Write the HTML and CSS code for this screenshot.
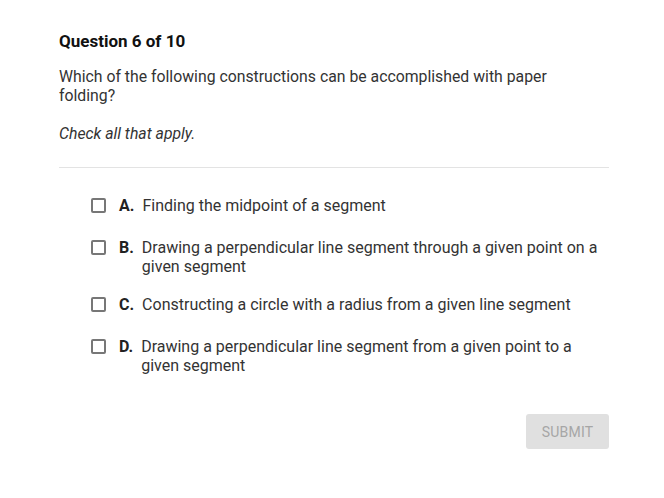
FILE: index.html
```html
<!DOCTYPE html>
<html>
<head>
<meta charset="utf-8">
<link rel="stylesheet" href="styles.css">
</head>
<body>
<div class="quiz">
  <h1 class="title">Question 6 of 10</h1>
  <p class="prompt">Which of the following constructions can be accomplished with paper folding?</p>
  <p class="hint">Check all that apply.</p>
  <hr class="divider">
  <ul class="options">
    <li class="option"><span class="box-col"><span class="box"></span></span><span class="letter">A.</span><span class="text">Finding the midpoint of a segment</span></li>
    <li class="option"><span class="box-col"><span class="box"></span></span><span class="letter">B.</span><span class="text">Drawing a perpendicular line segment through a given point on a given segment</span></li>
    <li class="option"><span class="box-col"><span class="box"></span></span><span class="letter">C.</span><span class="text">Constructing a circle with a radius from a given line segment</span></li>
    <li class="option"><span class="box-col"><span class="box"></span></span><span class="letter">D.</span><span class="text">Drawing a perpendicular line segment from a given point to a given segment</span></li>
  </ul>
  <div class="actions"><button class="submit">SUBMIT</button></div>
</div>
</body>
</html>
```
FILE: styles.css
```css
html, body {
  margin: 0;
  padding: 0;
  background: #fff;
}
body {
  font-family: Roboto, "Liberation Sans", sans-serif;
  color: #333;
}
.quiz {
  width: 550px;
  margin-left: 59px;
  padding-top: 32px;
}
.title {
  margin: 0;
  font-size: 17px;
  line-height: 19px;
  font-weight: 700;
  color: #111;
}
.prompt {
  margin: 16px 0 0;
  max-width: 530px;
  font-size: 15.8px;
  line-height: 19px;
  color: #333;
}
.hint {
  margin: 19px 0 0;
  font-size: 15.8px;
  line-height: 19px;
  font-style: italic;
  color: #333;
}
.divider {
  margin: 24px 0 0;
  border: 0;
  border-top: 1px solid #e3e3e3;
  height: 0;
}
.options {
  list-style: none;
  margin: 28px 0 0;
  padding: 0 0 0 32px;
  display: flex;
  flex-direction: column;
  gap: 19px;
}
.option {
  display: flex;
  align-items: flex-start;
  font-size: 16px;
  line-height: 19px;
  color: #333;
}
.box-col {
  display: block;
  height: 23px;
  flex: none;
}
.box {
  display: block;
  box-sizing: border-box;
  width: 15px;
  height: 15px;
  margin-top: 2px;
  border: 2px solid #777;
  border-radius: 2px;
}
.letter {
  margin-left: 13px;
  margin-right: 8px;
  font-weight: 700;
  color: #222;
  flex: none;
}
.text {
  flex: 1;
}
.actions {
  display: flex;
  justify-content: flex-end;
  margin-top: 39px;
}
.submit {
  width: 83px;
  height: 35px;
  border: 0;
  border-radius: 3px;
  background: #e0e0e0;
  color: #a6a6a6;
  font-family: Roboto, "Liberation Sans", sans-serif;
  font-size: 14px;
  letter-spacing: 0.2px;
  padding: 0;
}
```
